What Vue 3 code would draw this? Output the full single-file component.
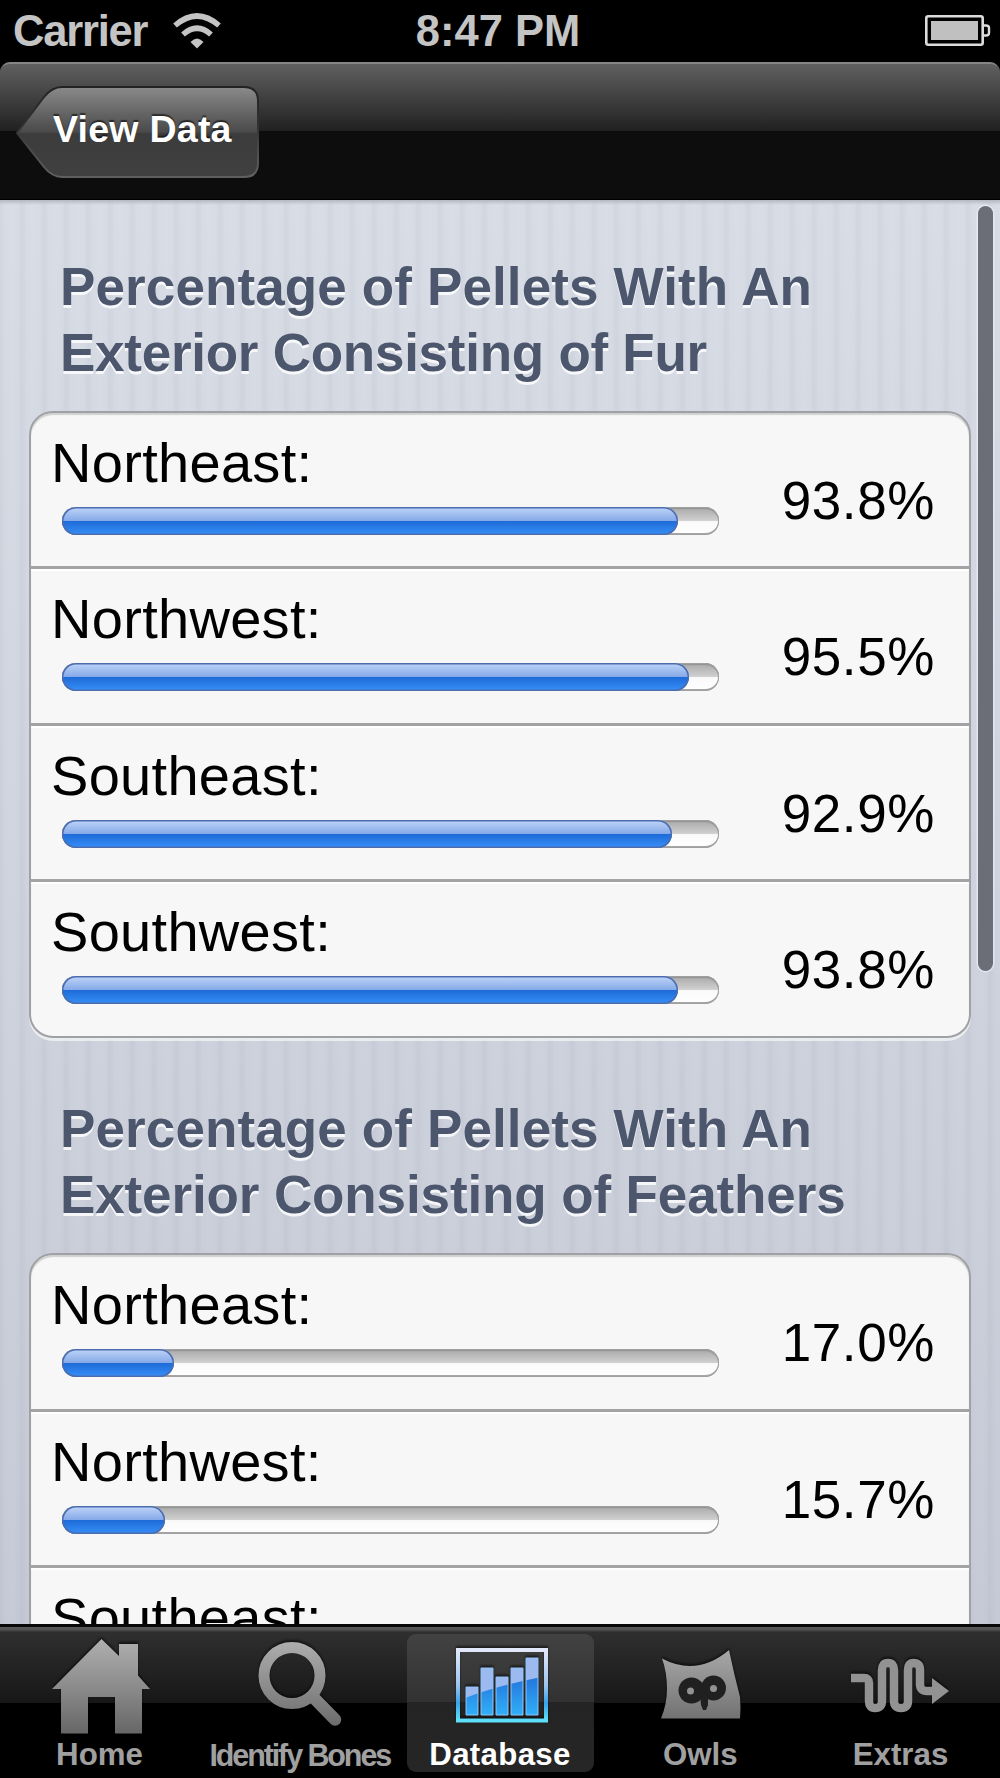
<script setup>
import { ref } from 'vue'

const activeTab = ref('Database')

const tabs = ['Home', 'Identify Bones', 'Database', 'Owls', 'Extras']

const sections = [
    {
        lines: ['Percentage of Pellets With An', 'Exterior Consisting of Fur'],
        rows: [
            { region: 'Northeast', value: 93.8 },
            { region: 'Northwest', value: 95.5 },
            { region: 'Southeast', value: 92.9 },
            { region: 'Southwest', value: 93.8 },
        ],
    },
    {
        lines: ['Percentage of Pellets With An', 'Exterior Consisting of Feathers'],
        rows: [
            { region: 'Northeast', value: 17.0 },
            { region: 'Northwest', value: 15.7 },
            { region: 'Southeast', value: null },
        ],
    },
]
</script>

<template>
    <div class="phone">
        <header class="status">
            <div class="status-left">
                <span class="carrier">Carrier</span>
                <svg class="wifi" width="50" height="38" viewBox="0 0 50 38">
                    <g fill="none" stroke="#c4c4c4" stroke-width="5.6">
                        <path d="M3 13.5 Q25 -5.5 47 13.5" />
                        <path d="M11 22.5 Q25 10 39 22.5" />
                    </g>
                    <path d="M18.5 30 Q25 23 31.5 30 L25 36.5 Z" fill="#c4c4c4" />
                </svg>
            </div>
            <span class="time">8:47 PM</span>
            <div class="status-right">
                <svg width="66" height="32" viewBox="0 0 66 32">
                    <rect x="1.3" y="1.3" width="56.4" height="28.4" rx="2" fill="none" stroke="#dcdcdc" stroke-width="2.6" />
                    <rect x="6" y="6" width="47" height="19" fill="#c0c0c0" />
                    <path d="M58.5 10.5 H61 Q64 10.5 64 13 V18 Q64 20.5 61 20.5 H58.5" fill="none" stroke="#dcdcdc" stroke-width="2.4" />
                </svg>
            </div>
        </header>

        <nav class="navbar">
            <button class="back">
                <svg class="back-shape" width="246" height="96" viewBox="0 0 246 96">
                    <defs>
                        <linearGradient id="backFill" x1="0" y1="0" x2="0" y2="1">
                            <stop offset="0" stop-color="#8a8a8a" />
                            <stop offset="0.5" stop-color="#4a4a4a" />
                            <stop offset="0.52" stop-color="#3c3c3c" />
                            <stop offset="1" stop-color="#404040" />
                        </linearGradient>
                        <linearGradient id="backEdge" x1="0" y1="0" x2="0" y2="1">
                            <stop offset="0" stop-color="#222" />
                            <stop offset="0.45" stop-color="#333" />
                            <stop offset="0.7" stop-color="#4c4c4c" />
                            <stop offset="1" stop-color="#606060" />
                        </linearGradient>
                    </defs>
                    <path d="M2 48 L29 12 Q37 2 47 2 H229 Q243 2 243 16 V78 Q243 92 229 92 H47 Q37 92 29 82 Z" fill="url(#backFill)" stroke="url(#backEdge)" stroke-width="2" />
                </svg>
                <span class="back-text">View Data</span>
            </button>
        </nav>

        <main class="content">
            <section v-for="(section, i) in sections" :key="i" class="section">
                <h2 class="heading">
                    <span v-for="line in section.lines" :key="line" class="heading-line">{{ line }}</span>
                </h2>
                <div class="card">
                    <div v-for="row in section.rows" :key="row.region" class="row">
                        <div class="measure">
                            <span class="label">{{ row.region }}:</span>
                            <div v-if="row.value !== null" class="track">
                                <div class="fill" :style="{ width: row.value + '%' }"></div>
                            </div>
                        </div>
                        <span v-if="row.value !== null" class="value">{{ row.value.toFixed(1) }}%</span>
                    </div>
                </div>
            </section>
            <div class="scrollbar"></div>
        </main>

        <footer class="tabbar">
            <button
                v-for="tab in tabs"
                :key="tab"
                class="tab"
                :class="{ active: tab === activeTab, tight: tab === 'Identify Bones' }"
                @click="activeTab = tab"
            >
                <svg v-if="tab === 'Home'" class="icon" width="100" height="100" viewBox="0 0 100 100">
                    <defs>
                        <linearGradient id="gray" gradientUnits="userSpaceOnUse" x1="0" y1="4" x2="0" y2="100">
                            <stop offset="0" stop-color="#b0b0b0" />
                            <stop offset="0.5" stop-color="#8c8c8c" />
                            <stop offset="1" stop-color="#666" />
                        </linearGradient>
                    </defs>
                    <path d="M51.5 5 L69 22 V10 H88 V41.5 L100 55 H92 V99.5 H65 V63 H38 V99.5 H11 V55 H2 Z" fill="url(#gray)" />
                </svg>
                <svg v-else-if="tab === 'Identify Bones'" class="icon" width="100" height="100" viewBox="0 0 100 100">
                    <circle cx="42" cy="41.5" r="28" fill="none" stroke="url(#gray)" stroke-width="11" />
                    <path d="M63 63 L85 85.5" fill="none" stroke="url(#gray)" stroke-width="12.5" stroke-linecap="round" />
                </svg>
                <svg v-else-if="tab === 'Database'" class="icon" width="100" height="100" viewBox="0 0 100 100">
                    <defs>
                        <linearGradient id="frame" x1="0" y1="0" x2="0" y2="1">
                            <stop offset="0" stop-color="#e2e8fa" />
                            <stop offset="0.5" stop-color="#9cc4f0" />
                            <stop offset="0.75" stop-color="#38a4e8" />
                            <stop offset="1" stop-color="#5fe0fa" />
                        </linearGradient>
                        <linearGradient id="blue" gradientUnits="userSpaceOnUse" x1="0" y1="42" x2="0" y2="84">
                            <stop offset="0" stop-color="#2373dc" />
                            <stop offset="1" stop-color="#32b4fa" />
                        </linearGradient>
                        <clipPath id="bars">
                            <path d="M16 53h12v28H16z M31 34h12v47H31z M46 43h12v38H46z M61 34h12v47H61z M76 24h12v57H76z" />
                        </clipPath>
                    </defs>
                    <rect x="8" y="16" width="88" height="70.5" fill="none" stroke="url(#frame)" stroke-width="4" />
                    <g clip-path="url(#bars)">
                        <rect x="10" y="20" width="82" height="64" fill="#9cb9f0" />
                        <path d="M10 66 Q45 52 92 43 V84 H10 Z" fill="url(#blue)" />
                    </g>
                    <path d="M16 53h12v28H16z M31 34h12v47H31z M46 43h12v38H46z M61 34h12v47H61z M76 24h12v57H76z" fill="none" stroke="#8cc4fa" stroke-width="1" />
                </svg>
                <svg v-else-if="tab === 'Owls'" class="icon" width="100" height="100" viewBox="0 0 100 100">
                    <path d="M12 24.5 Q47 43 79 16 Q84 40 90 63 Q91 74 90 84.5 H11 Q17 70 17 55 Q17 38 12 24.5 Z" fill="url(#gray)" />
                    <g fill="#202020">
                        <circle cx="41.5" cy="56.5" r="13" />
                        <circle cx="63.5" cy="54" r="12.5" />
                        <path d="M50 61 H58 V71 L56 76 H53 L51 71 Z" />
                    </g>
                    <circle cx="40.5" cy="57" r="3.5" fill="#929292" />
                    <circle cx="63.5" cy="54.5" r="3.5" fill="#929292" />
                </svg>
                <svg v-else class="icon" width="100" height="100" viewBox="0 0 100 100">
                    <path d="M0 44 H13 Q18 44 18 49 V67 Q18 74 24 74 Q31 74 31 67 V36 Q31 29 37 29 Q43 29 43 36 V67 Q43 74 50 74 Q57 74 57 67 V36 Q57 29 62.5 29 Q69 29 69 36 V50 Q69 57 76 57 H84" fill="none" stroke="#929292" stroke-width="8.5" />
                    <path d="M81 44 L98 57 L81 70 Z" fill="#929292" />
                </svg>
                <span class="tab-text">{{ tab }}</span>
            </button>
        </footer>
    </div>
</template>

<style>
body {
    margin: 0;
    background: #000;
}
</style>

<style scoped>
.phone {
    width: 1000px;
    height: 1778px;
    display: flex;
    flex-direction: column;
    overflow: hidden;
    background: #000;
    font-family: "Liberation Sans", Arial, sans-serif;
}
button {
    border: 0;
    padding: 0;
    background: none;
    font-family: inherit;
}
.status {
    height: 62px;
    flex: none;
    display: grid;
    grid-template-columns: 1fr auto 1fr;
    align-items: center;
    color: #c4c4c4;
    font-weight: bold;
    font-size: 43.5px;
    line-height: 60px;
}
.status-left {
    display: flex;
    align-items: center;
    padding-left: 13px;
    gap: 25px;
}
.carrier {
    letter-spacing: -1.2px;
}
.time {
    position: relative;
    left: -2px;
}
.status-right {
    display: flex;
    justify-content: flex-end;
    padding-right: 9px;
}
.navbar {
    height: 138px;
    flex: none;
    box-sizing: border-box;
    padding: 21px 0 0 15px;
    border-top: 2px solid #858585;
    border-bottom: 1px solid #000;
    border-radius: 10px 10px 0 0;
    background: linear-gradient(#606060, #202020 50%, #0d0d0d 50%, #0d0d0d);
}
.back {
    display: grid;
    width: 246px;
    height: 96px;
    color: #fff;
}
.back-shape,
.back-text {
    grid-area: 1 / 1;
}
.back-text {
    padding-left: 38px;
    text-align: left;
    font-size: 37.5px;
    font-weight: bold;
    line-height: 89px;
    letter-spacing: 0.25px;
    white-space: nowrap;
    text-shadow: 0 -2px 1px rgba(0, 0, 0, 0.55);
}
.content {
    position: relative;
    flex: 1;
    min-height: 0;
    overflow: hidden;
    box-sizing: border-box;
    padding: 54px 29px 0;
    background:
        linear-gradient(#b4b8c0, rgba(180, 184, 192, 0) 5px),
        repeating-linear-gradient(90deg, rgba(125, 135, 155, 0.08) 0, rgba(125, 135, 155, 0) 5px, rgba(255, 255, 255, 0.03) 12px, rgba(125, 135, 155, 0) 18px, rgba(125, 135, 155, 0.08) 22px),
        linear-gradient(#d8dce5, #c5c9d5);
}
.section {
    margin-bottom: 58px;
}
.heading {
    margin: 0;
    padding: 0 0 25px 31px;
    color: #4c566c;
    font-size: 53px;
    line-height: 66px;
    text-shadow: 0 3px 0 rgba(255, 255, 255, 0.8);
    white-space: nowrap;
}
.heading-line {
    display: block;
    letter-spacing: 0.12px;
}
.heading-line:last-child {
    letter-spacing: -0.12px;
}
.section:first-child .heading-line:last-child {
    letter-spacing: -0.26px;
}
.card {
    box-sizing: border-box;
    border: 2px solid #a0a1a4;
    border-radius: 24px;
    background: #f7f7f7;
    box-shadow: 0 3px 0 rgba(255, 255, 255, 0.6), inset 0 2px 1px #d0d0d0;
}
.row {
    display: flex;
    justify-content: space-between;
    box-sizing: border-box;
    height: 156.4px;
    padding: 22px 34px 0 20px;
    border-bottom: 3px solid #a2a3a5;
}
.row:not(:first-child) {
    box-shadow: inset 0 2px 0 #fff;
}
.row:last-child {
    height: 154px;
    border-bottom: 0;
}
.label {
    display: block;
    height: 56px;
    font-size: 56px;
    line-height: 56px;
    letter-spacing: 0.3px;
}
.track {
    width: 657px;
    height: 28px;
    margin: 16px 0 0 11px;
    box-sizing: border-box;
    border-radius: 14px;
    background: linear-gradient(#a8a8a8, #cfcfcf 48%, #fafafa 52%, #fff);
    box-shadow: inset 0 0 0 1px #a0a0a0, inset 0 -2px 0 #a6a6a6, inset 0 2px 1px #929292;
}
.fill {
    height: 28px;
    border-radius: 14px;
    background: linear-gradient(#c0d6f8, #86a9e8 49%, #1e6bd8 51%, #3790f8);
    box-shadow: inset 0 0 0 1.5px #4c6cae;
}
.value {
    padding-top: 38px;
    font-size: 53px;
    line-height: 56px;
    letter-spacing: 0.6px;
}
.scrollbar {
    position: absolute;
    top: 6px;
    right: 7px;
    width: 15px;
    height: 765px;
    border-radius: 8px;
    background: #6b6e77;
    box-shadow: 0 0 0 1.5px rgba(235, 238, 245, 0.7);
}
.tabbar {
    height: 154px;
    flex: none;
    box-sizing: border-box;
    display: flex;
    justify-content: space-between;
    padding: 5px 6px 0;
    border-top: 3px solid #080808;
    background: linear-gradient(#5a5a5a 0, #505050 3px, #2f2f2f 5px, #171717 76px, #000 76px);
}
.tab {
    display: flex;
    flex-direction: column;
    align-items: center;
    width: 187px;
    height: 138px;
    margin-top: 2px;
    color: #a0a0a0;
}
.tab.active {
    border-radius: 9px;
    color: #fff;
    background: linear-gradient(#424242, #323232 49.5%, #242424 49.5%, #262626);
}
.icon {
    flex: none;
    filter: drop-shadow(0 -2px 1px rgba(0, 0, 0, 0.55));
}
.tab-text {
    font-size: 31.25px;
    font-weight: bold;
    line-height: 42px;
    white-space: nowrap;
}
.active .tab-text {
    letter-spacing: 0.3px;
}
.tight .tab-text {
    font-size: 30.5px;
    letter-spacing: -2.1px;
}
</style>
